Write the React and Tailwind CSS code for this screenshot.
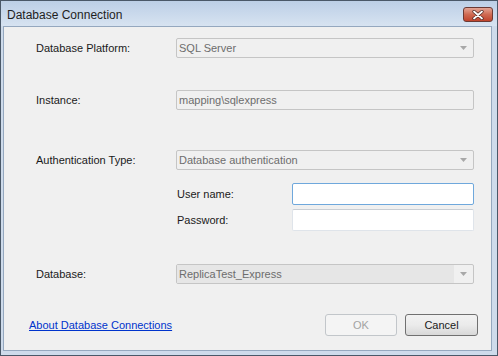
import React from "react";

const font = { fontFamily: '"Liberation Sans", Arial, sans-serif' };

function Arrow() {
    return (
        <svg width="7" height="4" viewBox="0 0 7 4" className="shrink-0">
            <path d="M0 0 H7 L3.5 4 Z" fill="#a8a8a8" />
        </svg>
    );
}

function DisabledSelect({ value, shaded }) {
    return (
        <div className="w-[298px] h-[20px] flex items-center border border-[#c5c5c5] rounded-[2px] bg-[#f0f0f0] pr-[6px]">
            <div className={"flex-1 h-full flex items-center pl-[2px] text-[#6d6d6d] " + (shaded ? "bg-[#e6e6e6] mr-[6px]" : "")}>
                {value}
            </div>
            <Arrow />
        </div>
    );
}

export default function App() {
    return (
        <div className="w-[498px] h-[356px] flex flex-col bg-[#cedbeb] border border-[#4a5868] text-[11px] text-black" style={font}>
            {/* title bar */}
            <div className="h-[25px] flex items-start justify-between pl-[6px] pr-[4px] bg-gradient-to-b from-[#bccfe6] to-[#d7e3f1]">
                <span className="text-[12px] text-[#1e1e1e] mt-[5px]">Database Connection</span>
                <div className="mt-[6px] w-[30px] h-[15px] rounded-[3px] border border-[#6b3a34] bg-gradient-to-b from-[#e3a595] via-[#cf6a52] to-[#c0432c] flex items-center justify-center">
                    <svg width="12" height="10" viewBox="0 0 12 10">
                        <path d="M2 1.5 L10 8.5 M10 1.5 L2 8.5" stroke="#4a2520" strokeWidth="3.2" strokeLinecap="round" />
                        <path d="M2 1.5 L10 8.5 M10 1.5 L2 8.5" stroke="#ffffff" strokeWidth="1.8" strokeLinecap="round" />
                    </svg>
                </div>
            </div>

            {/* body */}
            <div className="flex-1 ml-[2px] mr-[5px] mb-[4px] border border-[#95a8bf] bg-[#f0f0f0] flex flex-col pl-[32px] pr-[16px] pt-[11px]">
                <div className="flex items-center h-[20px]">
                    <span className="w-[140px] text-[#1a1a1a]">Database Platform:</span>
                    <DisabledSelect value="SQL Server" />
                </div>

                <div className="flex items-center h-[20px] mt-[32px]">
                    <span className="w-[140px] text-[#1a1a1a]">Instance:</span>
                    <div className="w-[298px] h-[20px] flex items-center border border-[#c5c5c5] rounded-[2px] bg-[#f0f0f0] pl-[2px] text-[#6d6d6d]">
                        mapping\sqlexpress
                    </div>
                </div>

                <div className="flex items-center h-[20px] mt-[40px]">
                    <span className="w-[140px] text-[#1a1a1a]">Authentication Type:</span>
                    <DisabledSelect value="Database authentication" />
                </div>

                <div className="flex items-center h-[22px] mt-[13px] pl-[141px]">
                    <span className="w-[115px] text-[#1a1a1a]">User name:</span>
                    <div className="w-[182px] h-[22px] border border-[#6fa8dc] rounded-[2px] bg-white" />
                </div>

                <div className="flex items-center h-[22px] mt-[4px] pl-[141px]">
                    <span className="w-[115px] text-[#1a1a1a]">Password:</span>
                    <div className="w-[182px] h-[22px] border border-[#dfe4ea] border-t-[#c9ced4] rounded-[2px] bg-white" />
                </div>

                <div className="flex items-center h-[20px] mt-[33px]">
                    <span className="w-[140px] text-[#1a1a1a]">Database:</span>
                    <DisabledSelect value="ReplicaTest_Express" shaded />
                </div>

                <div className="flex items-center h-[22px] mt-[30px] -ml-[7px] -mr-[3px]">
                    <a href="#" className="text-[#0033cc] underline">About Database Connections</a>
                    <div className="flex-1" />
                    <button className="w-[72px] h-[22px] border border-[#c2c6ca] rounded-[3px] bg-[#f4f4f4] text-[#a3a3a3]">OK</button>
                    <button className="ml-[8px] w-[73px] h-[22px] border border-[#707070] rounded-[3px] bg-gradient-to-b from-[#f2f2f2] via-[#ebebeb] to-[#d8d8d8] text-[#1a1a1a]">Cancel</button>
                </div>
            </div>
        </div>
    );
}
